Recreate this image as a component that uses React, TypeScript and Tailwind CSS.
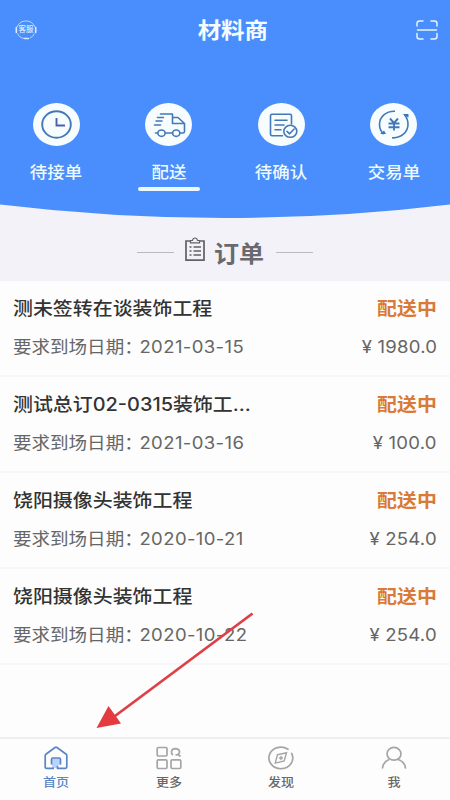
import React from 'react';

interface Order {
  id: number;
  name: string;
  date: string;
  amount: string;
}

const orders: Order[] = [
  { id: 1, name: '测未签转在谈装饰工程', date: '2021-03-15', amount: '1980.0' },
  { id: 2, name: '测试总订02-0315装饰工...', date: '2021-03-16', amount: '100.0' },
  { id: 3, name: '饶阳摄像头装饰工程', date: '2020-10-21', amount: '254.0' },
  { id: 4, name: '饶阳摄像头装饰工程', date: '2020-10-22', amount: '254.0' },
];

const ClockIcon = () => (
  <svg viewBox="0 0 47 43" className="h-[43px] w-[47px]" fill="none" stroke="#4478b8" strokeWidth="1.9">
    <ellipse cx="23.5" cy="21.5" rx="14.3" ry="13.2" />
    <path d="M23.5 15v7.5h8.5" stroke="#4b5fae" />
  </svg>
);

const TruckIcon = () => (
  <svg viewBox="0 0 47 43" className="h-[43px] w-[47px]" fill="none" stroke="#4478b8" strokeWidth="1.6" strokeLinecap="round" strokeLinejoin="round">
    <path d="M15.5 11h12v9.500M27.5 14.5h5.500l6.500 6v8q0 1.500-1.500 1.500h-3M28 20.500h10.500M12.500 14.500h6M11 18h6M9.500 22h6M10.500 30h2M20.500 30h7" />
    <ellipse cx="16.5" cy="30.2" rx="3.6" ry="3.2" />
    <ellipse cx="31.2" cy="30.2" rx="3.6" ry="3.2" />
  </svg>
);

const ConfirmIcon = () => (
  <svg viewBox="0 0 47 43" className="h-[43px] w-[47px]" fill="none" stroke="#4478b8" strokeWidth="1.6" strokeLinecap="round" strokeLinejoin="round">
    <path d="M24.5 32.8h-10.500q-1.500 0-1.500-1.500v-18.600q0-1.500 1.500-1.500h18q1.500 0 1.500 1.500v8.300M17 17.300h12M17 22h9M17 26.700h6" />
    <ellipse cx="32.3" cy="28.3" rx="6.500" ry="6" />
    <path d="M29 28.300l2.600 2.500 4.500-4.800" />
  </svg>
);

const TradeIcon = () => (
  <svg viewBox="0 0 47 43" className="h-[43px] w-[47px]" fill="none" stroke="#4478b8" strokeWidth="1.6">
    <path d="M25 8.300C16 8 9.500 14 9.500 21.500q0 5.500 4 9.700M22 34.800C31 35.500 38 29 38 21.500q0-5.500-3.500-9.700" />
    <path d="M10 31h6l-2-3.500zM32.500 11h6v3.500z" fill="#3776bd" stroke="none" />
    <path d="M20 15.500l4 4.500 4-4.500M24 20v7.500M18.500 20.500h11M18.500 24.200h11" strokeWidth="1.900" />
  </svg>
);

const ServiceIcon = () => (
  <div className="relative flex h-5 w-[22px] items-center justify-center">
    <svg viewBox="0 0 22 20" className="absolute inset-0 h-5 w-[22px]" fill="none" stroke="#dcecff">
      <path d="M2 7C4 2.800 7 1 11 1s7 1.800 9 6M2.500 13.500C4 16.500 6 18 9 18.500M19.500 13.500q-2 3.500-4.500 4.500" strokeWidth="0.8" />
      <path d="M1.300 7.500v5M20.700 7.500v5" strokeWidth="1.600" strokeLinecap="round" />
      <path d="M9.500 18.500h4" strokeWidth="1.500" strokeLinecap="round" />
    </svg>
    <span className="text-[7.500px] leading-none font-medium text-[#dcecff]">客服</span>
  </div>
);

const ScanIcon = () => (
  <svg viewBox="0 0 22 20" className="h-5 w-[22px]" fill="none" stroke="#e6f4ff" strokeWidth="1.500" strokeLinecap="round">
    <path d="M1 6V3.500Q1 1 3.500 1H7M15 1h3.500Q21 1 21 3.500V6M1 13.500V16.500Q1 19 3.500 19H7M15 19h3.500Q21 19 21 16.500V13.500M1.500 10h19" />
  </svg>
);

const ClipboardIcon = () => (
  <svg viewBox="0 0 22 25" className="h-[25px] w-[22px]" fill="none" stroke="#626166">
    <path d="M6 4H2v19.200h18V4h-4" strokeWidth="1.700" />
    <path d="M6.500 5.800V3.500h2q.5-2.500 2.500-2.500t2.500 2.500h2v2.300z" strokeWidth="1.200" />
    <path d="M5.500 10h2M5.500 14h2M5.500 18h2M9.500 10h7.500M9.500 14h7.500M9.500 18h7.500" strokeWidth="1.300" />
  </svg>
);

const HomeIcon = () => (
  <svg viewBox="0 0 26 24" className="h-6 w-[26px]" fill="none" stroke="#5a86c6" strokeWidth="1.700" strokeLinejoin="round">
    <path d="M9 22v-8.500q0-1.300 1.300-1.300h6q1.300 0 1.300 1.300V19h-3v3z" fill="#b9d4ff" stroke="none" />
    <path d="M11 22.300H3.500q-1.300 0-1.300-1.300V9.500q0-.8.700-1.300L12 1.500q1-.7 2 0l9.200 6.700q.6.500.6 1.300V21q0 1.300-1.300 1.300H14.500v-2.500" />
    <path d="M8.500 18.500v-5q0-1.500 1.500-1.500h6q1.500 0 1.500 1.500v5" />
  </svg>
);

const MoreIcon = () => (
  <svg viewBox="0 0 26 24" className="h-6 w-[26px]" fill="none" stroke="#a5a5a5" strokeWidth="1.700">
    <rect x="1.200" y="1.500" width="9.800" height="8.500" rx="1.200" />
    <rect x="1.200" y="13.800" width="9.800" height="8.700" rx="1.200" />
    <rect x="15" y="13.800" width="9.800" height="8.700" rx="1.200" />
    <path d="M17 9q-2-1.500-1.500-3.800.8-2.600 3.700-2.600 4.300.2 4.300 3.200 0 3-4 3.300M22 8.300l2.500 2.200" />
  </svg>
);

const CompassIcon = () => (
  <svg viewBox="0 0 26 24" className="h-6 w-[26px]" fill="none" stroke="#a5a5a5" strokeWidth="1.700" strokeLinecap="round">
    <path d="M20 3.300A11.900 10.800 0 1 0 23.700 7.500" />
    <path d="M9.500 8.700l9-2-2.300 8.200-9 2.200zM13 10.500v3M11.500 12h3" strokeWidth="1.400" />
  </svg>
);

const UserIcon = () => (
  <svg viewBox="0 0 26 24" className="h-6 w-[26px]" fill="none" stroke="#a5a5a5" strokeWidth="1.700" strokeLinecap="round">
    <ellipse cx="13" cy="7.800" rx="7" ry="6.400" />
    <path d="M1.500 22q.8-6 6-8.200M16.500 13.300q7 2 8 8.700" />
  </svg>
);

const categories = [
  { label: '待接单', icon: <ClockIcon />, active: false },
  { label: '配送', icon: <TruckIcon />, active: true },
  { label: '待确认', icon: <ConfirmIcon />, active: false },
  { label: '交易单', icon: <TradeIcon />, active: false },
];

const tabs = [
  { label: '首页', icon: <HomeIcon />, active: true },
  { label: '更多', icon: <MoreIcon />, active: false },
  { label: '发现', icon: <CompassIcon />, active: false },
  { label: '我', icon: <UserIcon />, active: false },
];

const Header = () => (
  <header className="h-[281px] bg-[#f3f2f9]">
    <div className="relative h-[218px]">
      {/* Fondo azul con borde inferior curvo */}
      <svg viewBox="0 0 450 218" className="absolute inset-0 h-[218px] w-[450px]">
        <path d="M0 0H450V204.500Q338 218 225 218T0 204.500Z" fill="#498efc" />
      </svg>
      <div className="relative">
        <div className="flex h-[60px] items-center justify-between pr-3 pl-[15px]">
          <ServiceIcon />
          <h1 className="scale-x-[1.09] pt-0.5 pl-3 text-[21.500px] leading-none font-bold text-[#f4fcff]">材料商</h1>
          <ScanIcon />
        </div>
        <div className="flex pt-[43px]">
          {categories.map((item) => (
            <div key={item.label} className="flex w-1/4 flex-col items-center">
              <div className="h-[43px] w-[47px] rounded-[50%] bg-[#f7fdff]">{item.icon}</div>
              <span className="mt-3.5 scale-x-[1.09] text-base leading-6 font-medium text-[#ecfaff]">{item.label}</span>
              {item.active && <div className="mt-[3px] h-[3.500px] w-[62px] rounded-full bg-[#ecfaff]" />}
            </div>
          ))}
        </div>
      </div>
    </div>
    <div className="flex h-[63px] items-center justify-center pt-[6px]">
      <div className="h-px w-[37px] bg-[#bbb9bf]" />
      <div className="mr-[7px] ml-[10px] -mt-1.5">
        <ClipboardIcon />
      </div>
      <h2 className="scale-x-[1.09] px-[3px] pt-[3px] text-[23px] leading-none font-bold text-[#6a696e]">订单</h2>
      <div className="ml-[11px] h-px w-[37px] bg-[#bbb9bf]" />
    </div>
  </header>
);

const OrderRow: React.FC<{ order: Order }> = ({ order }) => (
  <li className="h-24 border-b-2 border-[#f7f7f9] px-[13px] pt-[14px] whitespace-nowrap">
    <div className="flex h-7 items-center justify-between text-[18.300px] font-medium">
      <span className="origin-left scale-x-[1.09] text-[#333]">{order.name}</span>
      <span className="origin-right scale-x-[1.09] font-bold text-[#d97a38]">配送中</span>
    </div>
    <div className="mt-[11px] flex h-7 items-center justify-between text-[17px] text-[#666]">
      <span className="origin-left scale-x-[1.09]">
        要求到场日期：<span className="-ml-[3px] tracking-[0.35px]">{order.date}</span>
      </span>
      <span className="origin-right scale-x-[1.09] tracking-[0.2px]">¥ {order.amount}</span>
    </div>
  </li>
);

export default function App() {
  return (
    <div className="relative flex h-[800px] w-[450px] flex-col overflow-hidden bg-[#fdfdfd] font-['Inter','Noto_Sans_CJK_SC',sans-serif]">
      <Header />
      <ul className="flex-1">
        {orders.map((order) => (
          <OrderRow key={order.id} order={order} />
        ))}
      </ul>
      <nav className="flex h-[63px] border-t-2 border-[#efefef] pt-[7px]">
        {tabs.map((tab) => (
          <div key={tab.label} className="flex w-1/4 flex-col items-center">
            {tab.icon}
            <span className={tab.active ? 'mt-[5px] scale-x-[1.09] text-xs leading-4 font-medium text-[#5a86c6]' : 'mt-[5px] scale-x-[1.09] text-xs leading-4 font-medium text-[#666]'}>
              {tab.label}
            </span>
          </div>
        ))}
      </nav>
      {/* Flecha que señala la pestaña de inicio */}
      <svg viewBox="0 0 160 120" className="absolute top-[610px] left-[95px] h-[120px] w-[160px]">
        <path d="M157.500 3.500L18 107.500" stroke="#df4045" strokeWidth="2.800" />
        <path d="M1.500 118L13.500 96L26 113.500Z" fill="#e33b3f" />
      </svg>
    </div>
  );
}
